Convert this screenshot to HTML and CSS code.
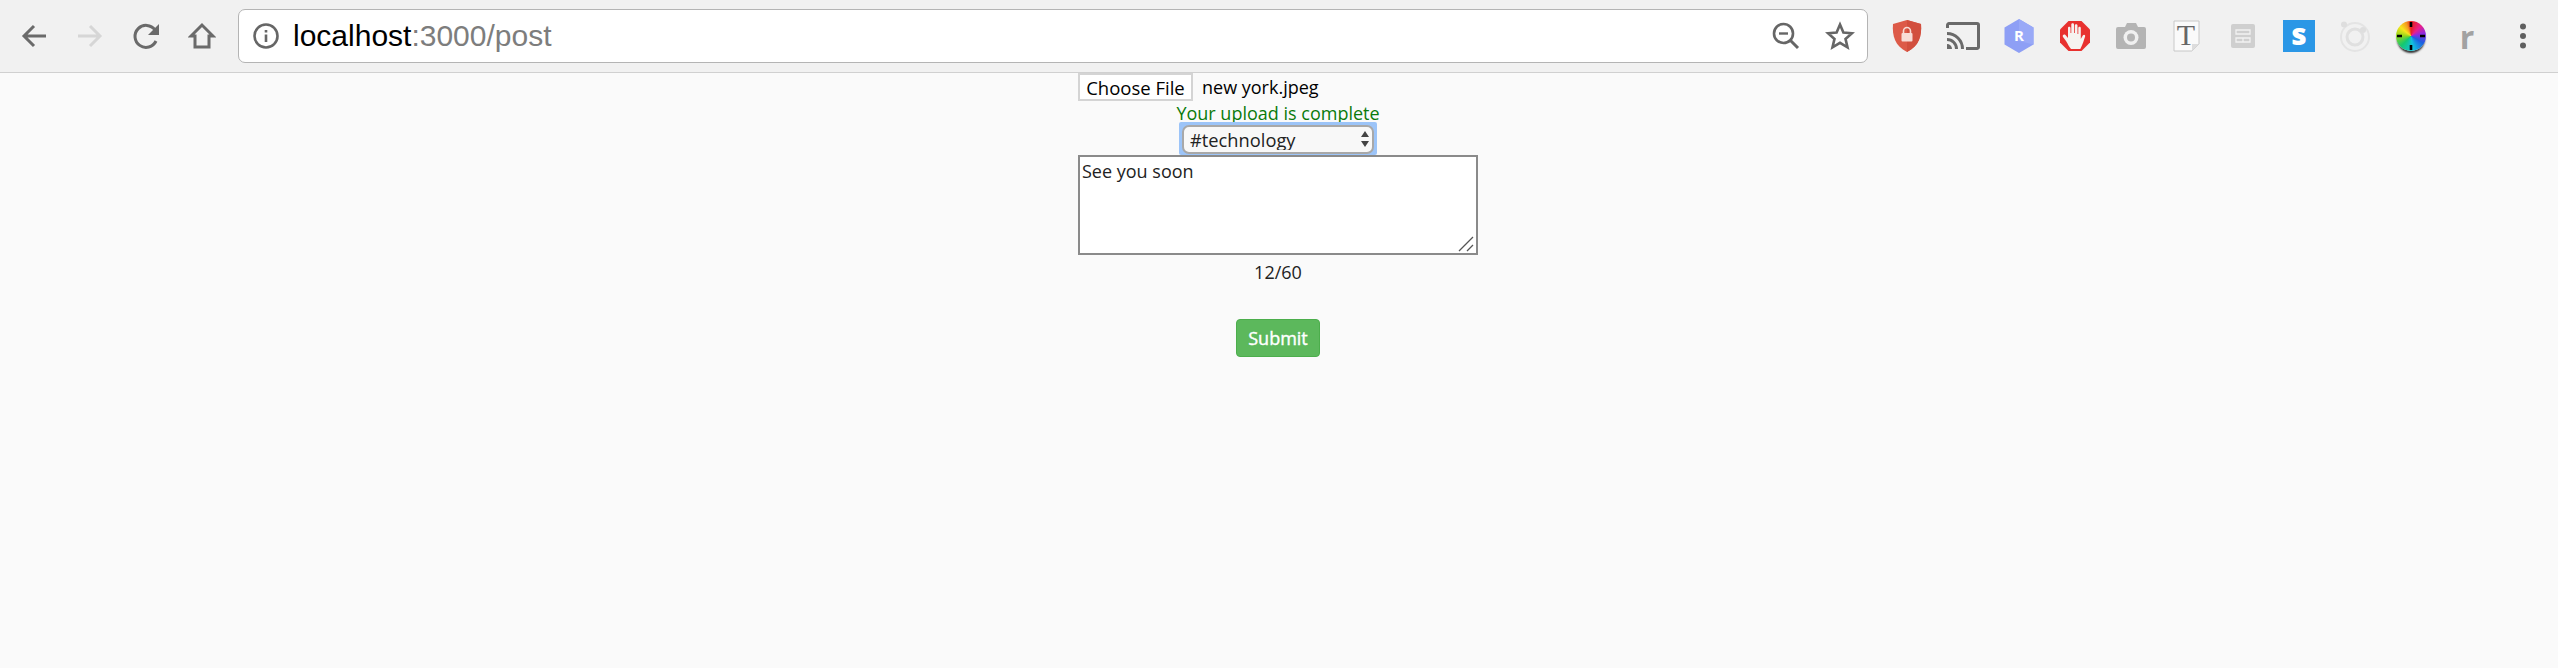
FILE: index.html
```html
<!DOCTYPE html>
<html lang="en">
<head>
  <meta charset="UTF-8">
  <title>localhost:3000/post</title>
  <link rel="stylesheet" href="styles.css">
</head>
<body>
  <header class="toolbar">
    <div class="nav-btn">
      <svg width="28" height="28" viewBox="0 0 28 28"><path d="M26 14H5M14 4L4 14l10 10" fill="none" stroke="#6a6a6a" stroke-width="3"/></svg>
    </div>
    <div class="nav-btn">
      <svg width="28" height="28" viewBox="0 0 28 28"><path d="M2 14h21M14 4l10 10-10 10" fill="none" stroke="#d6d6d6" stroke-width="3"/></svg>
    </div>
    <div class="nav-btn">
      <svg class="reload" width="28" height="28" viewBox="0 0 28 28"><path d="M23 19a11 11 0 1 1-1-11" fill="none" stroke="#6a6a6a" stroke-width="3"/><path d="M26 2v11H15z" fill="#6a6a6a"/></svg>
    </div>
    <div class="nav-btn">
      <svg width="28" height="28" viewBox="0 0 28 28"><path d="M14 3L3 14h4v11h14V14h4z" fill="none" stroke="#6a6a6a" stroke-width="3"/></svg>
    </div>

    <div class="address">
      <svg class="info" width="28" height="28" viewBox="0 0 28 28"><circle cx="14" cy="14" r="11.500" fill="none" stroke="#666" stroke-width="2.600"/><path d="M12.700 12.500h2.600V20h-2.600zM12.700 8h2.600v2.600h-2.600z" fill="#666"/></svg>
      <span class="url"><span class="host">localhost</span>:3000/post</span>
      <svg class="zoom-icon" width="30" height="30" viewBox="0 0 30 30"><circle cx="12.500" cy="12.500" r="9.500" fill="none" stroke="#666" stroke-width="2.600"/><path d="M8 12.500h9" stroke="#666" stroke-width="2.400"/><path d="M19.500 19.500L27 27" stroke="#666" stroke-width="3"/></svg>
      <svg class="star" width="30" height="30" viewBox="0 0 30 30"><path d="M15 3.500l3.400 8 8.600.7-6.500 5.700 2 8.400-7.500-4.500-7.500 4.500 2-8.400L3 12.200l8.600-.7z" fill="none" stroke="#666" stroke-width="2.600"/></svg>
    </div>

    <div class="extensions">
      <div class="ext">
        <svg width="30" height="34" viewBox="0 0 30 34"><path d="M15 1l14 4c1 12-2 22-14 28C3 27 0 17 1 5z" fill="#dd5a48"/><path d="M15 1l14 4c1 12-2 22-14 28z" fill="#d24f3e"/><rect x="9.500" y="14" width="11" height="8.500" rx="1" fill="#f8dcd6"/><path d="M11.500 14v-2a3.500 3.500 0 0 1 7 0v2" fill="none" stroke="#f8dcd6" stroke-width="1.600"/></svg>
      </div>
      <div class="ext">
        <svg width="34" height="28" viewBox="0 0 34 28"><path d="M1.500 6V3a1.500 1.500 0 0 1 1.500-1.500h28a1.500 1.500 0 0 1 1.500 1.500v22a1.500 1.500 0 0 1-1.500 1.500H20" fill="none" stroke="#6a6a6a" stroke-width="3"/><path d="M1 11.500a15.500 15.500 0 0 1 15.500 15.500M1 17.500a9.500 9.500 0 0 1 9.500 9.500" fill="none" stroke="#6a6a6a" stroke-width="3"/><path d="M1 22a5 5 0 0 1 5 5H1z" fill="#6a6a6a"/></svg>
      </div>
      <div class="ext">
        <svg width="30" height="34" viewBox="0 0 30 34"><path d="M15 0l14.500 8.500v17L15 34 .5 25.500v-17z" fill="#8e9ff5"/><path d="M15 0l14.500 8.500v17L15 22z" fill="#99a9f7"/><text x="15" y="22" class="ext-r">R</text></svg>
      </div>
      <div class="ext">
        <svg width="32" height="32" viewBox="0 0 32 32"><path d="M9.500 1h13L31 9.500v13L22.500 31h-13L1 22.500v-13z" fill="#e8312f"/><path d="M12 29c-2-2-3-5-5-8l-3-4c-1-2 1-3 2.500-2l2.500 3V8c0-1.800 2.500-1.800 2.500 0v5h.8V4.500c0-1.800 2.700-1.800 2.700 0V13h.8V5.500c0-1.800 2.700-1.800 2.700 0V14h.8V8c0-1.800 2.500-1.800 2.500 0v11l2-3.500c1-1.500 2.800-.8 2.300 1-1 3-2.300 8-4.800 12.500z" fill="#f6f3f0"/></svg>
      </div>
      <div class="ext">
        <svg width="30" height="26" viewBox="0 0 30 26"><path d="M2 4h7l2-4h9l2 4h6a2 2 0 0 1 2 2v18a2 2 0 0 1-2 2H2a2 2 0 0 1-2-2V6a2 2 0 0 1 2-2z" fill="#b4b4b4"/><circle cx="15" cy="14.500" r="7.500" fill="#f0f0f0"/><circle cx="15" cy="14.500" r="4" fill="#b4b4b4"/></svg>
      </div>
      <div class="ext">
        <svg width="28" height="32" viewBox="0 0 28 32"><path d="M1 1h25v23l-7 7H1z" fill="#fafafa" stroke="#c8c8c8"/><path d="M19 31v-7h7z" fill="#ddd"/><text x="13" y="25" class="ext-t">T</text></svg>
      </div>
      <div class="ext">
        <svg width="24" height="24" viewBox="0 0 24 24"><rect width="24" height="24" rx="2" fill="#cfcfcf"/><path d="M5 6h14v4H5zM5 14h14v4H5zM12 14v4" fill="none" stroke="#f2f2f2" stroke-width="1.300"/></svg>
      </div>
      <div class="ext">
        <div class="ext-s">s</div>
      </div>
      <div class="ext">
        <svg width="32" height="32" viewBox="0 0 32 32"><circle cx="16" cy="17" r="14" fill="none" stroke="#e4e4e4" stroke-width="2"/><circle cx="16" cy="17" r="8" fill="none" stroke="#e0e0e0" stroke-width="3"/><circle cx="5" cy="4.500" r="3" fill="#dedede"/><circle cx="24" cy="10" r="3" fill="#dedede"/></svg>
      </div>
      <div class="ext">
        <div class="color-wheel">
          <svg width="30" height="30" viewBox="0 0 30 30"><path d="M15 1v5M15 24v5M1 15h5M24 15h5" stroke="#000" stroke-width="2.600"/></svg>
        </div>
      </div>
      <div class="ext ext-letter">r</div>
      <div class="ext">
        <svg width="8" height="26" viewBox="0 0 8 26"><circle cx="4" cy="3.500" r="3" fill="#5f5f5f"/><circle cx="4" cy="13" r="3" fill="#5f5f5f"/><circle cx="4" cy="22.500" r="3" fill="#5f5f5f"/></svg>
      </div>
    </div>
  </header>

  <main class="post-form">
    <div class="file-row">
      <button class="file-btn" type="button">Choose File</button>
      <span class="file-name">new york.jpeg</span>
    </div>
    <div class="upload-msg">Your upload is complete</div>
    <div class="select-wrap">
      <select class="tag-select">
        <option>#technology</option>
      </select>
      <svg class="select-arrows" width="10" height="18" viewBox="0 0 10 18"><path d="M5 1l4 6H1zM5 17L1 11h8z" fill="#444"/></svg>
    </div>
    <div class="text-wrap">
      <textarea class="post-text">See you soon</textarea>
      <svg class="resize-grip" width="16" height="16" viewBox="0 0 16 16"><path d="M1 15L15 1M9 15l6-6" stroke="#555" stroke-width="1.300"/></svg>
    </div>
    <div class="counter">12/60</div>
    <button class="submit-btn" type="button">Submit</button>
  </main>
</body>
</html>
```

FILE: styles.css
```css
body {
  margin: 0;
  height: 668px;
  overflow: hidden;
  background: #fafafa;
  font-family: "Open Sans", sans-serif;
  color: #222;
}

.toolbar {
  display: flex;
  align-items: center;
  height: 73px;
  box-sizing: border-box;
  padding-left: 6px;
  background: #f1f1f1;
  border-bottom: 1px solid #d0d0d0;
}
.nav-btn {
  width: 56px;
  height: 56px;
  display: flex;
  align-items: center;
  justify-content: center;
}
.reload {
  margin-left: 2px;
}

.address {
  display: flex;
  align-items: center;
  width: 1630px;
  height: 54px;
  box-sizing: border-box;
  margin-left: 8px;
  background: #fff;
  border: 1px solid #b4b4b4;
  border-radius: 7px;
}
.info {
  margin-left: 13px;
}
.url {
  flex: 1;
  margin-left: 13px;
  font-family: "Liberation Sans", sans-serif;
  font-size: 30px;
  line-height: 40px;
  white-space: nowrap;
  color: #7d7d7d;
}
.host {
  color: #000;
}
.zoom-icon {
  margin-right: 24px;
}
.star {
  margin-right: 12px;
}

.extensions {
  display: flex;
  align-items: center;
  margin-left: 11px;
}
.ext {
  width: 56px;
  height: 56px;
  display: flex;
  align-items: center;
  justify-content: center;
}
.ext-r {
  font: bold 15px "Open Sans", sans-serif;
  fill: #fff;
  text-anchor: middle;
}
.ext-t {
  font: 30px "Liberation Serif", serif;
  fill: #666;
  text-anchor: middle;
}
.ext-s {
  width: 32px;
  height: 32px;
  background: #2b97e6;
  color: #fff;
  font: 800 30px/28px "Open Sans", sans-serif;
  text-align: center;
}
.color-wheel {
  width: 30px;
  height: 30px;
  border-radius: 50%;
  background: conic-gradient(#e8201c, #e8208c 45deg, #8a2be2 80deg, #1e5fe0 120deg, #12c0e0 170deg, #14c870 225deg, #8fd41e 270deg, #f7e51c 310deg, #f59a1f 340deg, #e8201c);
  box-shadow: 0 3px 2px -1px #333;
}
.ext-letter {
  font: bold 32px "Open Sans", sans-serif;
  color: #a2a2a2;
}

.post-form {
  display: flex;
  flex-direction: column;
  align-items: center;
  width: 400px;
  margin-left: 1078px;
  font-size: 18px;
}
.file-row {
  display: flex;
  align-items: center;
  align-self: flex-start;
  height: 28px;
}
.file-btn {
  height: 28px;
  width: 115px;
  padding: 0;
  background: #fff;
  border: 2px solid #d4d4d4;
  font: 18.500px "Open Sans", sans-serif;
  color: #000;
}
.file-name {
  margin-left: 9px;
  color: #000;
}
.upload-msg {
  height: 21px;
  line-height: 24px;
  color: #0a7a0a;
}
.select-wrap {
  position: relative;
  box-sizing: border-box;
  width: 198px;
  height: 33px;
  padding: 3px 3px 0;
  background: #9cc4f8;
  border-radius: 2px;
}
.tag-select {
  appearance: none;
  display: block;
  box-sizing: border-box;
  width: 192px;
  height: 29px;
  padding: 0 6px 2px;
  background: #f8f8f8;
  border: 2px solid #a8a8a8;
  border-radius: 7px;
  outline: none;
  font: 18.300px "Open Sans", sans-serif;
  color: #222;
}
.select-arrows {
  position: absolute;
  right: 7px;
  top: 8px;
}
.text-wrap {
  position: relative;
  width: 400px;
  height: 100px;
}
.post-text {
  display: block;
  width: 400px;
  height: 100px;
  box-sizing: border-box;
  margin: 0;
  padding: 2px;
  resize: none;
  background: #fff;
  border: 2px solid #8a8a8a;
  font: 18px "Open Sans", sans-serif;
  color: #222;
}
.resize-grip {
  position: absolute;
  right: 4px;
  bottom: 3px;
}
.counter {
  margin-top: 5px;
  line-height: 24px;
}
.submit-btn {
  width: 84px;
  height: 38px;
  margin-top: 35px;
  padding: 0;
  background: #5cb85c;
  border: 1px solid #4cae4c;
  border-radius: 4px;
  font: 18px "Open Sans", sans-serif;
  -webkit-text-stroke: 0.4px #fff;
  color: #fff;
}
```
